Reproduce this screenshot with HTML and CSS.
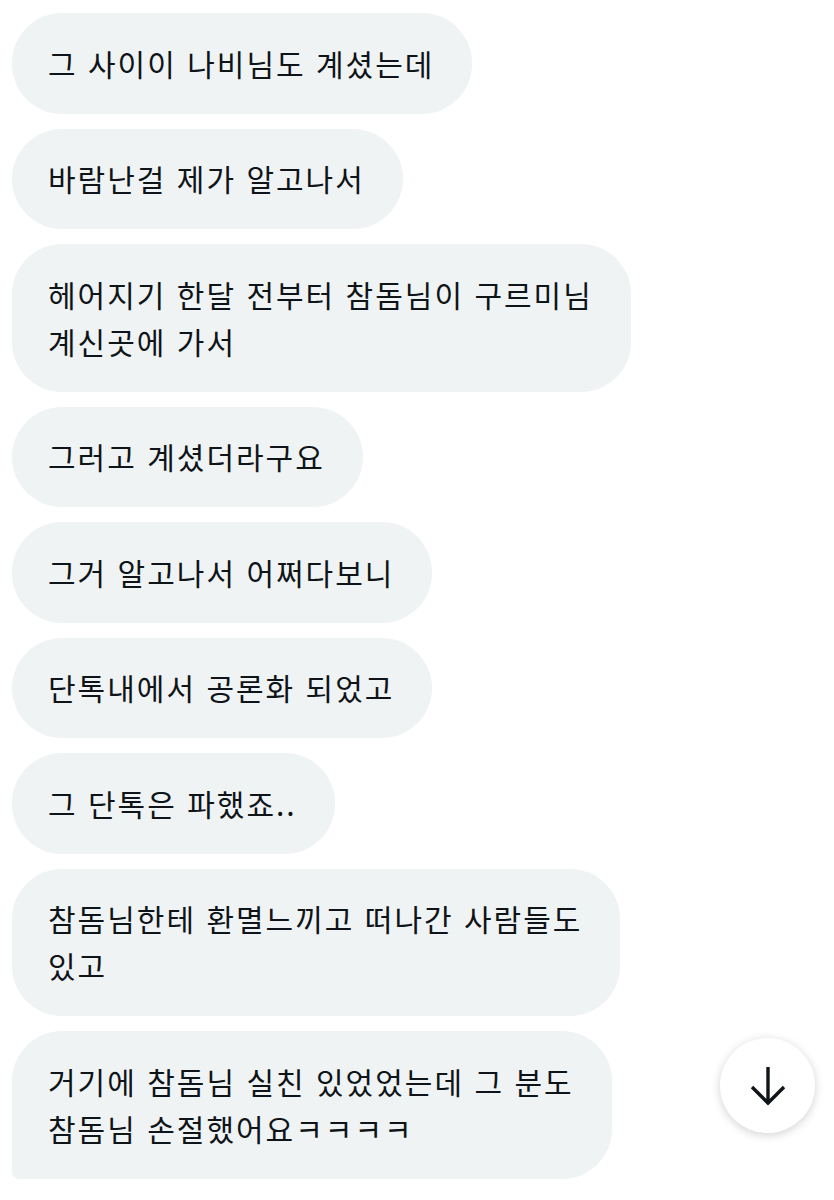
FILE: index.html
```html
<!DOCTYPE html>
<html lang="ko">
<head>
	<meta charset="UTF-8">
	<title>대화</title>
	<link rel="stylesheet" href="styles.css">
</head>
<body>
	<div class="chat">
		<div class="msg">그 사이이 나비님도 계셨는데</div>
		<div class="msg">바람난걸 제가 알고나서</div>
		<div class="msg">헤어지기 한달 전부터 참돔님이 구르미님<br>계신곳에 가서</div>
		<div class="msg">그러고 계셨더라구요</div>
		<div class="msg">그거 알고나서 어쩌다보니</div>
		<div class="msg">단톡내에서 공론화 되었고</div>
		<div class="msg">그 단톡은 파했죠..</div>
		<div class="msg">참돔님한테 환멸느끼고 떠나간 사람들도<br>있고</div>
		<div class="msg last">거기에 참돔님 실친 있었었는데 그 분도<br>참돔님 손절했어요ㅋㅋㅋㅋ</div>
	</div>

	<button class="down" type="button">
		<svg width="40" height="42" viewBox="0 0 40 42">
			<path d="M20 2 V38 M4 22 L20 38 L36 22" fill="none" stroke="#0f1419" stroke-width="3.4"/>
		</svg>
	</button>
</body>
</html>
```

FILE: styles.css
```css
*{
	margin:0;
	padding:0;
	box-sizing:border-box;
}
body{
	background:#fff;
	font-family:"Noto Sans CJK KR","Noto Sans",sans-serif;
	color:#0f1419;
}
.chat{
	display:flex;
	flex-direction:column;
	align-items:flex-start;
	gap:15px;
	padding:13px 12px;
}
.msg{
	background:#eff3f4;
	border-radius:50px;
	padding:26.75px 38px 26.75px 36px;
	font-size:30px;
	line-height:47px;
	letter-spacing:2px;
	word-break:keep-all;
	max-width:680px;
}
.msg.last{
	border-bottom-left-radius:7px;
}
.down{
	position:absolute;
	left:720px;
	top:1038px;
	width:95px;
	height:95px;
	border:none;
	border-radius:50%;
	background:#fff;
	box-shadow:0 2px 10px rgba(0,0,0,0.18);
	display:flex;
	align-items:center;
	justify-content:center;
	cursor:pointer;
}
```
